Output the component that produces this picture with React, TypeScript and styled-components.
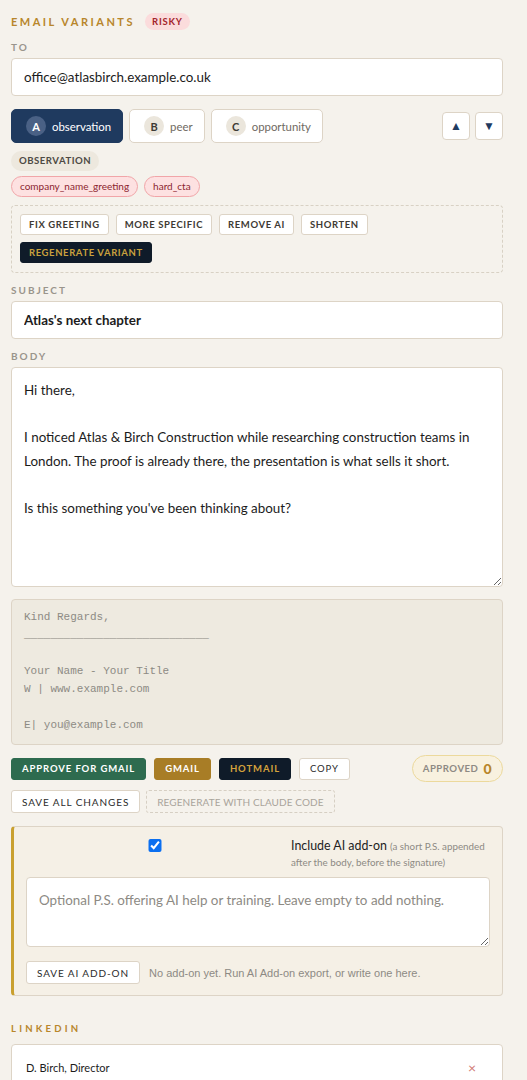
import React, {useState} from 'react';
import styled, {createGlobalStyle} from "styled-components";

const GlobalStyle = createGlobalStyle`
  html, body {
    margin: 0;
    background: #f5f2ec;
  }
  body {
    font-family: Lato, "Noto Sans", sans-serif;
    color: #1c1c1c;
  }
`

type VariantType = {
    key: string
    label: string
}

const variants: VariantType[] = [
    {key: 'A', label: 'observation'},
    {key: 'B', label: 'peer'},
    {key: 'C', label: 'opportunity'},
]

const fixes = ['Fix greeting', 'More specific', 'Remove AI', 'Shorten']

const bodyText = `Hi there,

I noticed Atlas & Birch Construction while researching construction teams in London. The proof is already there, the presentation is what sells it short.

Is this something you've been thinking about?`

export default function App() {
    const [active, setActive] = useState('A')
    const [withAddOn, setWithAddOn] = useState(true)

    return (
        <Page>
            <GlobalStyle/>
            <HeadRow>
                <SectionTitle>Email variants</SectionTitle>
                <RiskBadge>Risky</RiskBadge>
            </HeadRow>

            <FieldLabel>To</FieldLabel>
            <TextInput defaultValue="office@atlasbirch.example.co.uk"/>

            <TabsRow>
                {variants.map(v => (
                    <Tab key={v.key} $active={active === v.key} onClick={() => setActive(v.key)}>
                        <TabLetter $active={active === v.key}>{v.key}</TabLetter>
                        {v.label}
                    </Tab>
                ))}
                <MoveButtons>
                    <MoveButton>▲</MoveButton>
                    <MoveButton>▼</MoveButton>
                </MoveButtons>
            </TabsRow>

            <AngleTag>Observation</AngleTag>
            <FlagRow>
                <Flag>company_name_greeting</Flag>
                <Flag>hard_cta</Flag>
            </FlagRow>

            <FixBox>
                {fixes.map(f => <SmallButton key={f}>{f}</SmallButton>)}
                <SmallButton $dark>Regenerate variant</SmallButton>
            </FixBox>

            <FieldLabel>Subject</FieldLabel>
            <TextInput $bold defaultValue="Atlas's next chapter"/>

            <FieldLabel>Body</FieldLabel>
            <BodyArea defaultValue={bodyText}/>

            <Signature>
                <div>Kind Regards,</div>
                <div>____________________________</div>
                <div>&nbsp;</div>
                <div>Your Name - Your Title</div>
                <div>W | www.example.com</div>
                <div>&nbsp;</div>
                <div>E| you@example.com</div>
            </Signature>

            <ActionRow>
                <ActionButton $kind="green">Approve for Gmail</ActionButton>
                <ActionButton $kind="gold">Gmail</ActionButton>
                <ActionButton $kind="dark">Hotmail</ActionButton>
                <ActionButton $kind="plain">Copy</ActionButton>
                <ApprovedPill>Approved <b>0</b></ApprovedPill>
            </ActionRow>
            <SaveRow>
                <OutlineButton>Save all changes</OutlineButton>
                <OutlineButton $dashed>Regenerate with Claude Code</OutlineButton>
            </SaveRow>

            <AddOnBox>
                <AddOnLabel>
                    <AddOnCheck type="checkbox" checked={withAddOn} onChange={() => setWithAddOn(!withAddOn)}/>
                    <AddOnText>Include AI add-on <Hint>(a short P.S. appended after the body, before the signature)</Hint></AddOnText>
                </AddOnLabel>
                <AddOnArea placeholder="Optional P.S. offering AI help or training. Leave empty to add nothing."/>
                <AddOnFooter>
                    <OutlineButton>Save AI add-on</OutlineButton>
                    <Muted>No add-on yet. Run AI Add-on export, or write one here.</Muted>
                </AddOnFooter>
            </AddOnBox>

            <LinkedinTitle>LinkedIn</LinkedinTitle>
            <ContactCard>
                <span>D. Birch, Director</span>
                <CloseMark>×</CloseMark>
            </ContactCard>
        </Page>
    );
}

const Page = styled.div`
  padding: 11px 24px 0 11px;
  display: flex;
  flex-direction: column;
`

const HeadRow = styled.div`
  display: flex;
  align-items: center;
  gap: 10px;
  height: 18px;
  margin-top: 1px;
`

const SectionTitle = styled.div`
  font-size: 11px;
  font-weight: 700;
  letter-spacing: 2.5px;
  text-transform: uppercase;
  color: #b8862b;
`

const RiskBadge = styled.span`
  font-size: 9.5px;
  font-weight: 700;
  letter-spacing: 0.8px;
  text-transform: uppercase;
  color: #a3242c;
  background: #fbdcdc;
  border-radius: 9px;
  padding: 2px 7px;
  line-height: 13px;
`

const FieldLabel = styled.div`
  font-size: 10px;
  font-weight: 700;
  letter-spacing: 2px;
  text-transform: uppercase;
  color: #9a958c;
  margin: 10px 0 4px;
  line-height: 14px;
`

const TextInput = styled.input<{ $bold?: boolean }>`
  box-sizing: border-box;
  width: 100%;
  height: 38px;
  padding: 0 12px;
  font-family: inherit;
  font-size: 13.4px;
  font-weight: ${(p) => p.$bold ? 700 : 400};
  color: #1c1c1c;
  background: #fff;
  border: 1px solid #ddd4c6;
  border-radius: 4px;
  outline: none;
`

const TabsRow = styled.div`
  display: flex;
  align-items: center;
  gap: 6px;
  margin-top: 13px;
`

const Tab = styled.button<{ $active: boolean }>`
  display: flex;
  align-items: center;
  gap: 6px;
  height: 34px;
  padding: 0 11px 0 14px;
  font-family: inherit;
  font-size: 11.4px;
  color: ${(p) => p.$active ? '#fff' : '#6f6a62'};
  background: ${(p) => p.$active ? '#1f3a5f' : '#fff'};
  border: 1px solid ${(p) => p.$active ? '#1f3a5f' : '#ddd4c6'};
  border-radius: 5px;
  cursor: pointer;
`

const TabLetter = styled.span<{ $active: boolean }>`
  width: 20px;
  height: 20px;
  border-radius: 50%;
  display: flex;
  align-items: center;
  justify-content: center;
  font-size: 11px;
  font-weight: 700;
  color: ${(p) => p.$active ? '#fff' : '#3d3a35'};
  background: ${(p) => p.$active ? '#4a6185' : '#ebe6dc'};
`

const MoveButtons = styled.div`
  margin-left: auto;
  display: flex;
  gap: 5px;
`

const MoveButton = styled.button`
  width: 28px;
  height: 28px;
  padding: 0;
  font-size: 12px;
  color: #1f3a5f;
  background: #fff;
  border: 1px solid #ddd4c6;
  border-radius: 4px;
`

const AngleTag = styled.span`
  align-self: flex-start;
  margin-top: 8px;
  font-size: 9.6px;
  font-weight: 700;
  letter-spacing: 0.5px;
  text-transform: uppercase;
  color: #4e4a44;
  background: #ede8de;
  border-radius: 10px;
  padding: 3px 8px;
  line-height: 14px;
`

const FlagRow = styled.div`
  display: flex;
  gap: 6px;
  margin-top: 5px;
`

const Flag = styled.span`
  font-size: 10px;
  color: #8c2530;
  background: #fde1e1;
  border: 1px solid #f1a5a8;
  border-radius: 11px;
  padding: 3px 8px;
  line-height: 13px;
`

const FixBox = styled.div`
  display: flex;
  flex-wrap: wrap;
  gap: 7px 7px;
  margin-top: 8px;
  padding: 8px 8px;
  border: 1px dashed #d8d1c4;
  border-radius: 4px;
  height: 50px;
  align-content: flex-start;
`

const SmallButton = styled.button<{ $dark?: boolean }>`
  height: 21px;
  padding: 0 8px;
  font-family: inherit;
  font-size: 9.5px;
  font-weight: 700;
  letter-spacing: 0.6px;
  text-transform: uppercase;
  color: ${(p) => p.$dark ? '#c9a13d' : '#3e3a34'};
  background: ${(p) => p.$dark ? '#0f1b29' : '#fff'};
  border: 1px solid ${(p) => p.$dark ? '#0f1b29' : '#ddd4c6'};
  border-radius: 3px;
`

const BodyArea = styled.textarea`
  box-sizing: border-box;
  width: 100%;
  height: 220px;
  padding: 11px 12px;
  font-family: inherit;
  font-size: 13.4px;
  line-height: 23.5px;
  color: #1c1c1c;
  background: #fff;
  border: 1px solid #ddd4c6;
  border-radius: 4px;
  resize: vertical;
  outline: none;
`

const Signature = styled.div`
  box-sizing: border-box;
  margin-top: 12px;
  padding: 8px 12px;
  height: 146px;
  font-family: "Liberation Mono", monospace;
  font-size: 11px;
  line-height: 18px;
  color: #8d8a84;
  background: #eeeae0;
  border: 1px solid #ddd4c6;
  border-radius: 4px;
`

const kinds = {
    green: {bg: '#2e6b4f', color: '#fff', border: '#2e6b4f'},
    gold: {bg: '#a87d26', color: '#fff', border: '#a87d26'},
    dark: {bg: '#0f1b29', color: '#d4a23c', border: '#0f1b29'},
    plain: {bg: '#fff', color: '#2b2b2b', border: '#ddd4c6'},
}

const ActionRow = styled.div`
  display: flex;
  align-items: center;
  gap: 8px;
  margin-top: 10px;
`

const ActionButton = styled.button<{ $kind: keyof typeof kinds }>`
  height: 22px;
  padding: 0 10px;
  font-family: inherit;
  font-size: 9.5px;
  font-weight: 700;
  letter-spacing: 0.9px;
  text-transform: uppercase;
  color: ${(p) => kinds[p.$kind].color};
  background: ${(p) => kinds[p.$kind].bg};
  border: 1px solid ${(p) => kinds[p.$kind].border};
  border-radius: 3px;
  ${(p) => p.$kind === 'plain' && 'font-weight: 400; padding: 0 10px; letter-spacing: 0.9px;'}
`

const ApprovedPill = styled.span`
  margin-left: auto;
  height: 27px;
  box-sizing: border-box;
  display: flex;
  align-items: center;
  gap: 5px;
  padding: 0 10px;
  font-size: 9.6px;
  font-weight: 700;
  letter-spacing: 0.5px;
  text-transform: uppercase;
  color: #8e8a84;
  background: #f8f1df;
  border: 1px solid #ecd99c;
  border-radius: 14px;

  b {
    font-size: 14px;
    color: #b8862b;
  }
`

const SaveRow = styled.div`
  display: flex;
  gap: 6px;
  margin-top: 8px;
`

const OutlineButton = styled.button<{ $dashed?: boolean }>`
  height: 23px;
  padding: 0 10px;
  font-family: inherit;
  font-size: 10px;
  letter-spacing: 0.9px;
  text-transform: uppercase;
  color: ${(p) => p.$dashed ? '#a9a49b' : '#2b2b2b'};
  background: ${(p) => p.$dashed ? 'transparent' : '#fff'};
  border: 1px ${(p) => p.$dashed ? 'dashed #d6cfc3' : 'solid #ddd4c6'};
  border-radius: 3px;
  ${(p) => p.$dashed && 'letter-spacing: 0.1px;'}
`

const AddOnBox = styled.div`
  margin-top: 13px;
  padding: 11px 12px 11px 12px;
  background: #f5f0e6;
  border: 1px solid #ddd4c6;
  border-left: 3px solid #c9a030;
  border-radius: 4px;
  display: flex;
  flex-direction: column;
`

const AddOnLabel = styled.label`
  display: flex;
  gap: 7px;
  font-size: 12.4px;
  line-height: 16px;
  color: #222;
`

const AddOnCheck = styled.input`
  flex: 1 1 0;
  height: 13px;
  margin: 1px 0 0;
  accent-color: #0b6ff0;
`

const AddOnText = styled.span`
  flex: 0 0 199px;
`

const Hint = styled.span`
  font-size: 9.8px;
  color: #8d8a84;
`

const AddOnArea = styled.textarea`
  box-sizing: border-box;
  width: 100%;
  height: 70px;
  margin-top: 7px;
  padding: 14px 12px;
  font-family: inherit;
  font-size: 13.4px;
  background: #fff;
  border: 1px solid #ddd4c6;
  border-radius: 4px;
  outline: none;

  &::placeholder {
    color: #8d8a84;
  }
`

const AddOnFooter = styled.div`
  display: flex;
  align-items: center;
  gap: 9px;
  margin-top: 14px;
`

const Muted = styled.span`
  font-family: "Liberation Sans", Arial, sans-serif;
  font-size: 11px;
  color: #8d8a84;
`

const LinkedinTitle = styled(SectionTitle)`
  margin-top: 27px;
  font-size: 9.6px;
  letter-spacing: 3.2px;
`

const ContactCard = styled.div`
  margin-top: 10px;
  height: 44px;
  display: flex;
  align-items: center;
  justify-content: space-between;
  padding: 0 26px 0 14px;
  font-size: 11px;
  background: #fff;
  border: 1px solid #ddd4c6;
  border-radius: 4px;
`

const CloseMark = styled.span`
  font-size: 14px;
  color: #d07a72;
`
